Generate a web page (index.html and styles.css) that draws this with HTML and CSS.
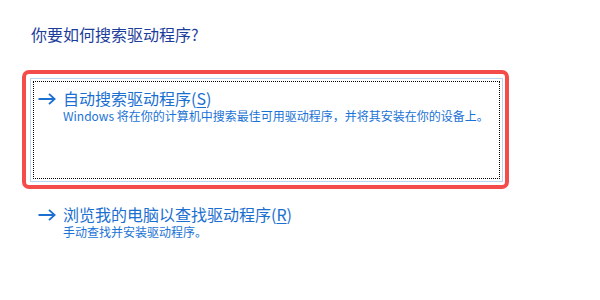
FILE: index.html
```html
<!DOCTYPE html>
<html lang="zh-CN">
<head>
<meta charset="utf-8">
<title>更新驱动程序</title>
<link rel="stylesheet" href="styles.css">
</head>
<body>
<div class="page">
  <h1 class="title">你要如何搜索驱动程序?</h1>
  <div class="highlight">
    <div class="frame">
      <div class="option option-focused">
        <svg class="arrow" width="18" height="12" viewBox="0 0 18 12" aria-hidden="true">
          <path d="M0.5 6 H16.5 M11 0.8 L16.6 6 L11 11.2" fill="none" stroke="#1b6fd1" stroke-width="1.8"/>
        </svg>
        <div class="option-text">
          <div class="option-title">自动搜索驱动程序(<u>S</u>)</div>
          <div class="option-desc">Windows 将在你的计算机中搜索最佳可用驱动程序，并将其安装在你的设备上。</div>
        </div>
      </div>
    </div>
  </div>
  <div class="option option-plain">
    <svg class="arrow" width="18" height="12" viewBox="0 0 18 12" aria-hidden="true">
      <path d="M0.5 6 H16.5 M11 0.8 L16.6 6 L11 11.2" fill="none" stroke="#1b6fd1" stroke-width="1.8"/>
    </svg>
    <div class="option-text">
      <div class="option-title">浏览我的电脑以查找驱动程序(<u>R</u>)</div>
      <div class="option-desc">手动查找并安装驱动程序。</div>
    </div>
  </div>
</div>
</body>
</html>
```
FILE: styles.css
```css
html, body {
  margin: 0;
  padding: 0;
  background: #ffffff;
}
body {
  font-family: "Noto Sans CJK SC", "Microsoft YaHei", sans-serif;
  width: 600px;
  height: 300px;
  overflow: hidden;
}
.page {
  padding: 23px 0 0 22px;
}
.title {
  margin: 0 0 0 9px;
  font-size: 16px;
  font-weight: normal;
  line-height: 22px;
  color: #1d3d9b;
}
.highlight {
  margin-top: 25px;
  width: 487px;
  box-sizing: border-box;
  border: 4px solid #f44c4a;
  border-radius: 7px;
  padding: 4px 2px 3px 4px;
}
.frame {
  border: 1px solid #b9d7f0;
  padding: 2px;
}
.option {
  display: flex;
  align-items: flex-start;
  gap: 7px;
  box-sizing: border-box;
}
.option-focused {
  border: 1px dotted #000000;
  height: 98px;
  padding: 6px 4px 0 4px;
}
.option-plain {
  margin-top: 15px;
  padding-left: 16px;
}
.arrow {
  flex: none;
  margin-top: 5px;
}
.option-text {
  display: flex;
  flex-direction: column;
}
.option-title {
  font-size: 16px;
  line-height: 20px;
  color: #1a6fd0;
}
.option-title u {
  text-underline-offset: 2px;
}
.option-desc {
  font-size: 12px;
  line-height: 16px;
  color: #1a73d6;
}
```
